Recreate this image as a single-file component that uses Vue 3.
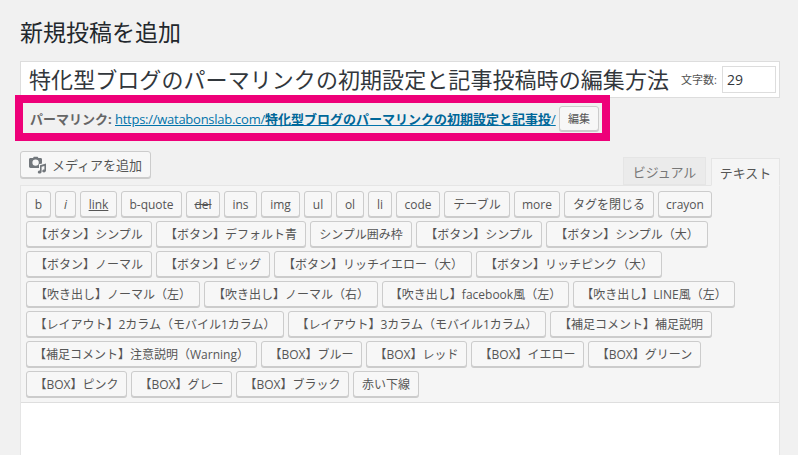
<script setup>
const rows = [
  [['b',25],['i',21],['link',37,'u'],['b-quote',61],['del',34,'s'],['ins',33],['img',39],['ul',28],['ol',28],['li',24],['code',44],['テーブル',66],['more',46],['タグを閉じる',90],['crayon',54]],
  [['【ボタン】シンプル',126],['【ボタン】デフォルト青',150],['シンプル囲み枠',102],['【ボタン】シンプル',126],['【ボタン】シンプル（大）',162]],
  [['【ボタン】ノーマル',126],['【ボタン】ビッグ',114],['【ボタン】リッチイエロー（大）',198],['【ボタン】リッチピンク（大）',186]],
  [['【吹き出し】ノーマル（左）',174],['【吹き出し】ノーマル（右）',174],['【吹き出し】facebook風（左）',187],['【吹き出し】LINE風（左）',162]],
  [['【レイアウト】2カラム（モバイル1カラム）',258],['【レイアウト】3カラム（モバイル1カラム）',258],['【補足コメント】補足説明',162]],
  [['【補足コメント】注意説明（Warning）',231],['【BOX】ブルー',101],['【BOX】レッド',101],['【BOX】イエロー',113],['【BOX】グリーン',113]],
  [['【BOX】ピンク',101],['【BOX】グレー',101],['【BOX】ブラック',113],['赤い下線',66]]
]
const buttons = rows.flat().map(([label, width, deco]) => ({ label, width, deco }))
</script>

<template>
  <div class="page">
    <h1 class="heading">新規投稿を追加</h1>

    <div class="title-box">
      <span class="title-text">特化型ブログのパーマリンクの初期設定と記事投稿時の編集方法</span>
      <span class="count-label">文字数:</span>
      <span class="count-input">29</span>
    </div>

    <div class="permalink">
      <strong class="perma-label">パーマリンク:</strong>
      <a class="perma-link"><span class="host">https://watabonslab.com/</span><b>特化型ブログのパーマリンクの初期設定と記事投</b><span>/</span></a>
      <span class="edit-btn">編集</span>
    </div>

    <div class="editor-head">
      <span class="media-btn">
        <svg class="media-icon" width="18" height="18" viewBox="0 0 18 18">
          <path fill="#72777c" fill-rule="evenodd" d="M1.5 2H4L4.8 0.8H8.6L9.4 2H11.6C12.4 2 13 2.6 13 3.4V7.4L10 8.2V12H1.5C0.7 12 0 11.4 0 10.6V3.4C0 2.6 0.7 2 1.5 2ZM6.6 3.4A3.2 3.2 0 1 0 6.6 9.8 3.2 3.2 0 1 0 6.6 3.4Z"/>
          <path fill="#72777c" d="M11 9.2 17 7.6V14.6C17 15.7 16 16.4 15 16.4 14 16.4 13.2 15.8 13.2 15 13.2 14 14.2 13.4 15 13.4L15.4 13.4V10L12.6 10.8V15.8C12.6 16.9 11.7 17.6 10.6 17.6 9.6 17.6 8.8 17 8.8 16.2 8.8 15.2 9.8 14.6 10.6 14.6L11 14.6Z"/>
        </svg>
        メディアを追加
      </span>
      <div class="tabs">
        <span class="tab">ビジュアル</span>
        <span class="tab active">テキスト</span>
      </div>
    </div>

    <div class="editor">
      <div class="toolbar">
        <span
          v-for="(btn, i) in buttons"
          :key="i"
          class="qt-btn"
          :class="{ underline: btn.deco === 'u', strike: btn.deco === 's', italic: btn.label === 'i' }"
          :style="{ width: btn.width + 'px' }"
        >{{ btn.label }}</span>
      </div>
      <div class="textarea"></div>
    </div>
  </div>
</template>

<style scoped>
.page {
  width: 798px;
  height: 455px;
  overflow: hidden;
  box-sizing: border-box;
  padding: 0 18px 0 20px;
  background: #f1f1f1;
  color: #444;
  font-family: "Open Sans", "Noto Sans CJK JP", sans-serif;
}
.heading {
  margin: 0;
  height: 61px;
  padding-top: 15px;
  box-sizing: border-box;
  font-size: 23px;
  line-height: 34px;
  font-weight: 400;
  color: #23282d;
}
.title-box {
  height: 37px;
  box-sizing: border-box;
  display: flex;
  align-items: center;
  padding: 0 5px 2px 8px;
  background: #fff;
  border: 1px solid #ddd;
}
.title-text {
  font-size: 22px;
  line-height: 30px;
  white-space: nowrap;
  color: #32373c;
  flex: none;
  width: 641px;
  letter-spacing: 0.07px;
}
.count-label {
  margin-left: 11px;
  font-size: 11px;
  width: 41px;
  white-space: nowrap;
  color: #555;
  flex: none;
}
.count-input {
  width: 54px;
  height: 27px;
  margin-top: 2px;
  box-sizing: border-box;
  border: 1px solid #ddd;
  padding-left: 4px;
  font-size: 14px;
  line-height: 25px;
  color: #32373c;
  flex: none;
}
.permalink {
  position: relative;
  margin: -3px 0 0 -5px;
  width: 595px;
  height: 46px;
  box-sizing: border-box;
  border: 8px solid #ee0079;
  background: #f1f1f1;
  display: flex;
  align-items: center;
  padding-left: 7px;
  font-size: 13px;
  color: #666;
  white-space: nowrap;
}
.perma-label {
  width: 85px;
  flex: none;
  font-weight: 700;
  color: #666;
  padding-top: 1px;
}
.perma-link {
  color: #0073aa;
  text-decoration: underline;
  flex: none;
  width: 444px;
  padding-top: 1px;
}
.host {
  letter-spacing: -0.26px;
}
.perma-link b {
  font-weight: 700;
  color: #006799;
}
.edit-btn {
  width: 40px;
  height: 25px;
  box-sizing: border-box;
  border: 1px solid #ccc;
  border-radius: 3px;
  background: #f7f7f7;
  box-shadow: 0 1px 0 #ccc;
  text-align: center;
  font-size: 11px;
  line-height: 23px;
  color: #555;
  flex: none;
}
.editor-head {
  height: 34px;
  margin-top: 10px;
  display: flex;
  justify-content: space-between;
  align-items: flex-end;
}
.media-btn {
  align-self: flex-start;
  width: 131px;
  height: 27px;
  box-sizing: border-box;
  border: 1px solid #ccc;
  border-radius: 3px;
  background: #f7f7f7;
  box-shadow: 0 1px 0 #ccc;
  display: flex;
  align-items: center;
  gap: 5px;
  padding-left: 8px;
  font-size: 13px;
  color: #555;
  white-space: nowrap;
}
.media-icon {
  flex: none;
}
.tabs {
  display: flex;
  gap: 5px;
}
.tab {
  width: 83px;
  height: 28px;
  box-sizing: border-box;
  border: 1px solid #e5e5e5;
  background: #ebebeb;
  text-align: center;
  font-size: 13px;
  line-height: 28px;
  color: #777;
  white-space: nowrap;
}
.tab.active {
  width: 69px;
  background: #f5f5f5;
  border-bottom-color: #f5f5f5;
  color: #555;
  position: relative;
  top: 1px;
}
.editor {
  width: 760px;
  height: 270px;
  box-sizing: border-box;
  background: #fff;
  border-left: 1px solid #e5e5e5;
  border-right: 1px solid #e5e5e5;
}
.toolbar {
  height: 218px;
  box-sizing: border-box;
  padding: 5px 5px 0;
  display: flex;
  flex-wrap: wrap;
  align-content: flex-start;
  gap: 4px;
  background: #f5f5f5;
  border-top: 1px solid #e5e5e5;
  border-bottom: 1px solid #dedede;
}
.qt-btn {
  height: 26px;
  box-sizing: border-box;
  border: 1px solid #ccc;
  border-radius: 3px;
  background: #f7f7f7;
  box-shadow: 0 1px 0 #ccc;
  text-align: center;
  font-size: 12px;
  line-height: 26px;
  color: #555;
  white-space: nowrap;
}
.qt-btn.underline {
  text-decoration: underline;
}
.qt-btn.strike {
  text-decoration: line-through;
}
.qt-btn.italic {
  font-style: italic;
}
</style>

<style>
html, body {
  margin: 0;
  background: #f1f1f1;
}
</style>
